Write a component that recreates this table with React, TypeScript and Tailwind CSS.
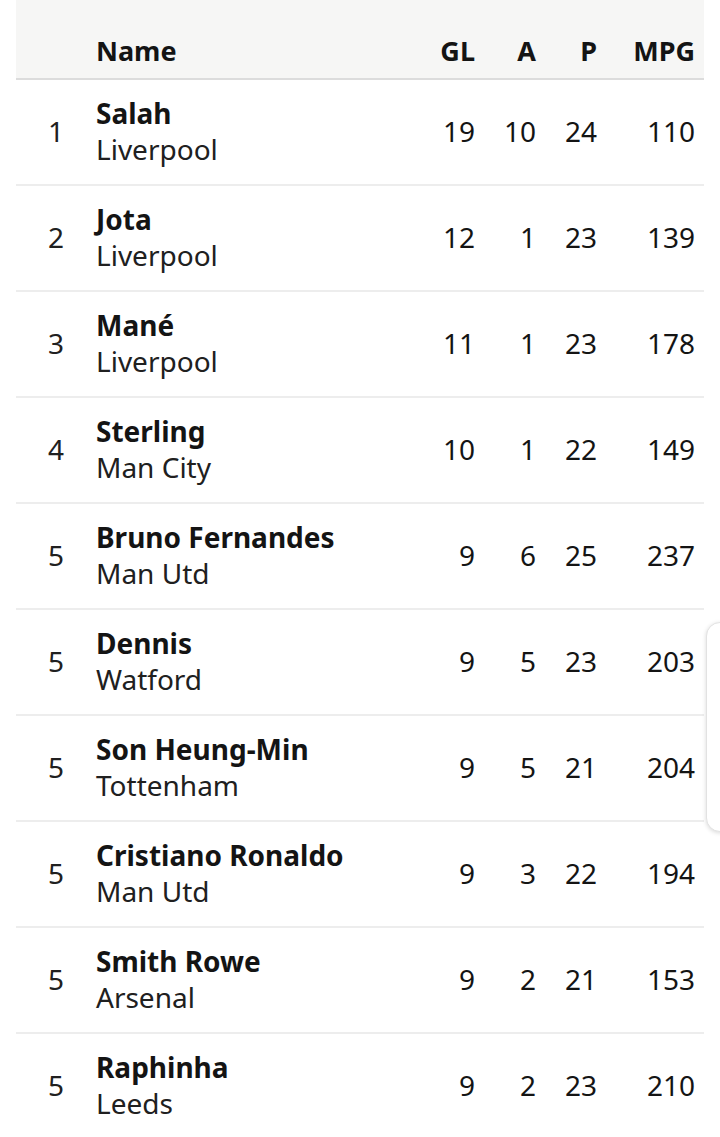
const rows = [
  { rank: 1, name: "Salah", team: "Liverpool", gl: 19, a: 10, p: 24, mpg: 110 },
  { rank: 2, name: "Jota", team: "Liverpool", gl: 12, a: 1, p: 23, mpg: 139 },
  { rank: 3, name: "Mané", team: "Liverpool", gl: 11, a: 1, p: 23, mpg: 178 },
  { rank: 4, name: "Sterling", team: "Man City", gl: 10, a: 1, p: 22, mpg: 149 },
  { rank: 5, name: "Bruno Fernandes", team: "Man Utd", gl: 9, a: 6, p: 25, mpg: 237 },
  { rank: 5, name: "Dennis", team: "Watford", gl: 9, a: 5, p: 23, mpg: 203 },
  { rank: 5, name: "Son Heung-Min", team: "Tottenham", gl: 9, a: 5, p: 21, mpg: 204 },
  { rank: 5, name: "Cristiano Ronaldo", team: "Man Utd", gl: 9, a: 3, p: 22, mpg: 194 },
  { rank: 5, name: "Smith Rowe", team: "Arsenal", gl: 9, a: 2, p: 21, mpg: 153 },
  { rank: 5, name: "Raphinha", team: "Leeds", gl: 9, a: 2, p: 23, mpg: 210 },
];

export default function App() {
  return (
    <div className="relative w-[720px] h-[1137px] overflow-hidden bg-white px-4 font-['Noto_Sans',sans-serif] text-[#141414]">
      {/* header */}
      <div className="flex h-[80px] items-end bg-[#f6f6f5] border-b-2 border-[#dcdcdc] pb-[7px] text-[27px] font-bold">
        <div className="w-[80px]" />
        <div className="flex-1">Name</div>
        <div className="w-[70px] text-right">GL</div>
        <div className="w-[61px] text-right">A</div>
        <div className="w-[61px] text-right">P</div>
        <div className="w-[98px] text-right">MPG</div>
        <div className="w-[9px]" />
      </div>

      {rows.map((r, idx) => (
        <div key={idx} className="flex h-[106px] items-center border-b-2 border-[#ededed] pb-[3px] text-[28px]">
          <div className="w-[80px] text-center text-[#202020]">{r.rank}</div>
          <div className="flex flex-1 flex-col leading-[36px]">
            <span className="font-bold">{r.name}</span>
            <span className="text-[#202020]">{r.team}</span>
          </div>
          <div className="w-[70px] text-right">{r.gl}</div>
          <div className="w-[61px] text-right">{r.a}</div>
          <div className="w-[61px] text-right">{r.p}</div>
          <div className="w-[98px] text-right">{r.mpg}</div>
          <div className="w-[9px]" />
        </div>
      ))}

      {/* side handle */}
      <div className="absolute left-[706px] top-[622px] h-[210px] w-[30px] rounded-[14px] border border-[#e2e2e2] bg-white shadow-[0_1px_4px_rgba(0,0,0,0.15)]" />
    </div>
  );
}
